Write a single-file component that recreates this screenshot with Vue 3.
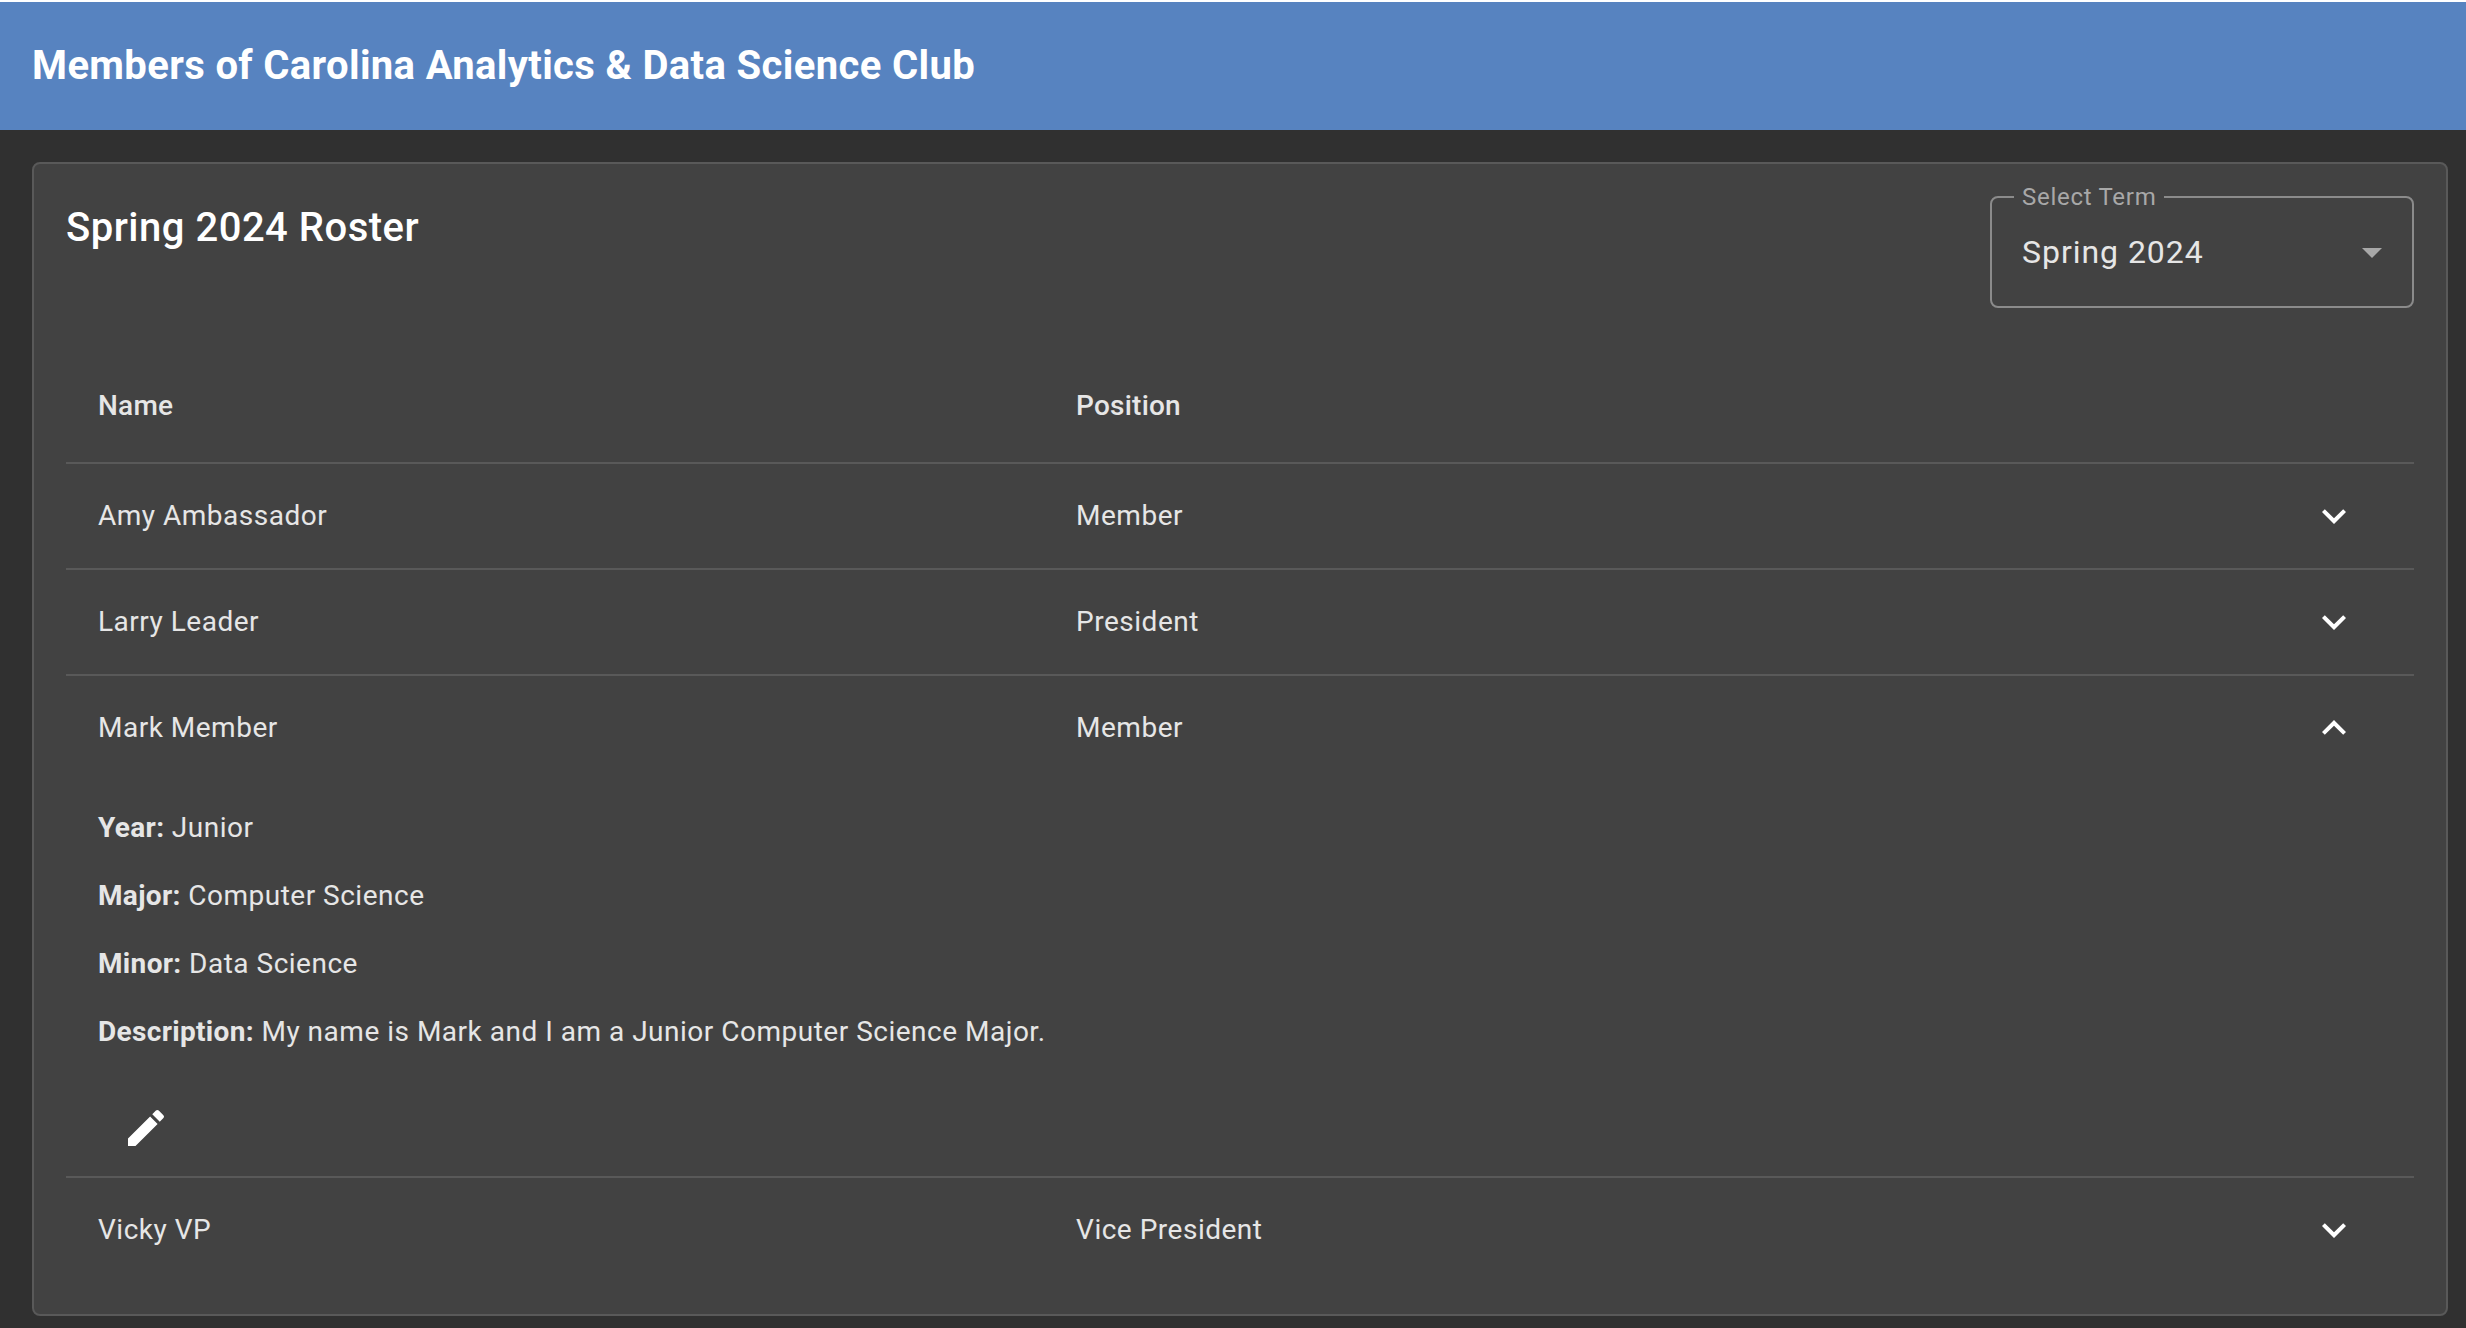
<script setup>
import { ref } from 'vue'

const term = ref('Spring 2024')
const terms = ['Spring 2024']

const members = [
  { id: 1, name: 'Amy Ambassador', position: 'Member' },
  { id: 2, name: 'Larry Leader', position: 'President' },
  {
    id: 3,
    name: 'Mark Member',
    position: 'Member',
    details: [
      { label: 'Year', value: 'Junior' },
      { label: 'Major', value: 'Computer Science' },
      { label: 'Minor', value: 'Data Science' },
      { label: 'Description', value: 'My name is Mark and I am a Junior Computer Science Major.' }
    ]
  },
  { id: 4, name: 'Vicky VP', position: 'Vice President' }
]

const expandedId = ref(3)

function toggle(member) {
  expandedId.value = expandedId.value === member.id ? null : member.id
}
</script>

<template>
  <div class="page">
    <header class="toolbar">
      <h1>Members of Carolina Analytics &amp; Data Science Club</h1>
    </header>

    <main class="card">
      <div class="card-head">
        <h2>{{ term }} Roster</h2>
        <div class="term-field">
          <label for="term">Select Term</label>
          <select id="term" v-model="term">
            <option v-for="t in terms" :key="t" :value="t">{{ t }}</option>
          </select>
          <svg class="caret" viewBox="0 0 20 10" aria-hidden="true"><path d="M0 0h20L10 10z" /></svg>
        </div>
      </div>

      <table>
        <thead>
          <tr>
            <th class="col-name" scope="col">Name</th>
            <th scope="col">Position</th>
            <th class="col-action"></th>
          </tr>
        </thead>
        <tbody v-for="member in members" :key="member.id">
          <tr>
            <td>{{ member.name }}</td>
            <td>{{ member.position }}</td>
            <td class="action">
              <button
                type="button"
                class="icon-button"
                :aria-label="'Toggle details for ' + member.name"
                :aria-expanded="expandedId === member.id"
                @click="toggle(member)"
              >
                <svg viewBox="0 0 24 24" aria-hidden="true">
                  <path v-if="expandedId === member.id" d="M12 8l-6 6 1.41 1.41L12 10.83l4.59 4.58L18 14z" />
                  <path v-else d="M16.59 8.59L12 13.17 7.41 8.59 6 10l6 6 6-6z" />
                </svg>
              </button>
            </td>
          </tr>
          <tr v-if="member.details && expandedId === member.id">
            <td class="details" colspan="3">
              <p v-for="d in member.details" :key="d.label"><b>{{ d.label }}:</b> {{ d.value }}</p>
              <button type="button" class="icon-button" :aria-label="'Edit ' + member.name">
                <svg viewBox="0 0 24 24" aria-hidden="true">
                  <path d="M3 17.25V21h3.75L17.81 9.94l-3.75-3.75L3 17.25zM20.71 7.04a1 1 0 0 0 0-1.41l-2.34-2.34a1 1 0 0 0-1.41 0l-1.83 1.83 3.75 3.75 1.83-1.83z" />
                </svg>
              </button>
            </td>
          </tr>
        </tbody>
      </table>
    </main>
  </div>
</template>

<style>
body {
  margin: 0;
  background: #303030;
}
</style>

<style scoped>
.page {
  box-sizing: border-box;
  min-height: 100vh;
  border-top: 2px solid #fff;
  background: #303030;
  color: #e6e6e6;
  font: 400 28px/40px Roboto, sans-serif;
}

.toolbar {
  display: flex;
  align-items: center;
  height: 128px;
  padding: 0 32px;
  background: #5783c0;
  color: #fff;
}

h1,
h2 {
  margin: 0;
  font-size: 40px;
  line-height: 64px;
}

h1 {
  font-weight: 700;
  letter-spacing: 0.009em;
}

h2 {
  color: #fff;
  font-weight: 500;
  letter-spacing: 0.0125em;
}

.card {
  margin: 32px 18px 0 32px;
  padding: 32px;
  border: 2px solid #595959;
  border-radius: 8px;
  background: #424242;
}

.card-head {
  display: flex;
  justify-content: space-between;
  align-items: flex-start;
  margin-bottom: 42px;
}

.term-field {
  position: relative;
  width: 424px;
}

.term-field label {
  position: absolute;
  top: -15px;
  left: 24px;
  padding: 0 8px;
  background: #424242;
  color: #a8a8a8;
  font-size: 24px;
  line-height: 32px;
  letter-spacing: 0.03em;
}

.term-field select {
  display: block;
  box-sizing: border-box;
  width: 100%;
  height: 112px;
  padding: 0 30px;
  border: 2px solid #8b8b8b;
  border-radius: 8px;
  appearance: none;
  background: transparent;
  color: #e6e6e6;
  font: 400 32px/48px Roboto, sans-serif;
  letter-spacing: 0.03em;
}

.caret {
  position: absolute;
  top: 52px;
  right: 32px;
  width: 20px;
  height: 10px;
  fill: #a8a8a8;
  pointer-events: none;
}

table {
  width: 100%;
  border-collapse: separate;
  border-spacing: 0;
  table-layout: fixed;
}

th,
td {
  height: 104px;
  padding: 0 32px;
  text-align: left;
  letter-spacing: 0.018em;
}

th {
  height: 112px;
  border-bottom: 2px solid #595959;
  font-weight: 500;
  letter-spacing: 0.008em;
}

tbody:not(:last-child) tr:last-child td {
  border-bottom: 2px solid #595959;
}

.col-name {
  width: 38.93%;
}

.col-action {
  width: 96px;
}

.icon-button {
  display: flex;
  align-items: center;
  justify-content: center;
  width: 96px;
  height: 96px;
  padding: 0;
  border: 0;
  border-radius: 50%;
  background: transparent;
  cursor: pointer;
}

.icon-button svg {
  width: 48px;
  height: 48px;
  fill: #fff;
}

.details p {
  margin: 28px 0;
}

.details b {
  letter-spacing: 0.012em;
}
</style>
